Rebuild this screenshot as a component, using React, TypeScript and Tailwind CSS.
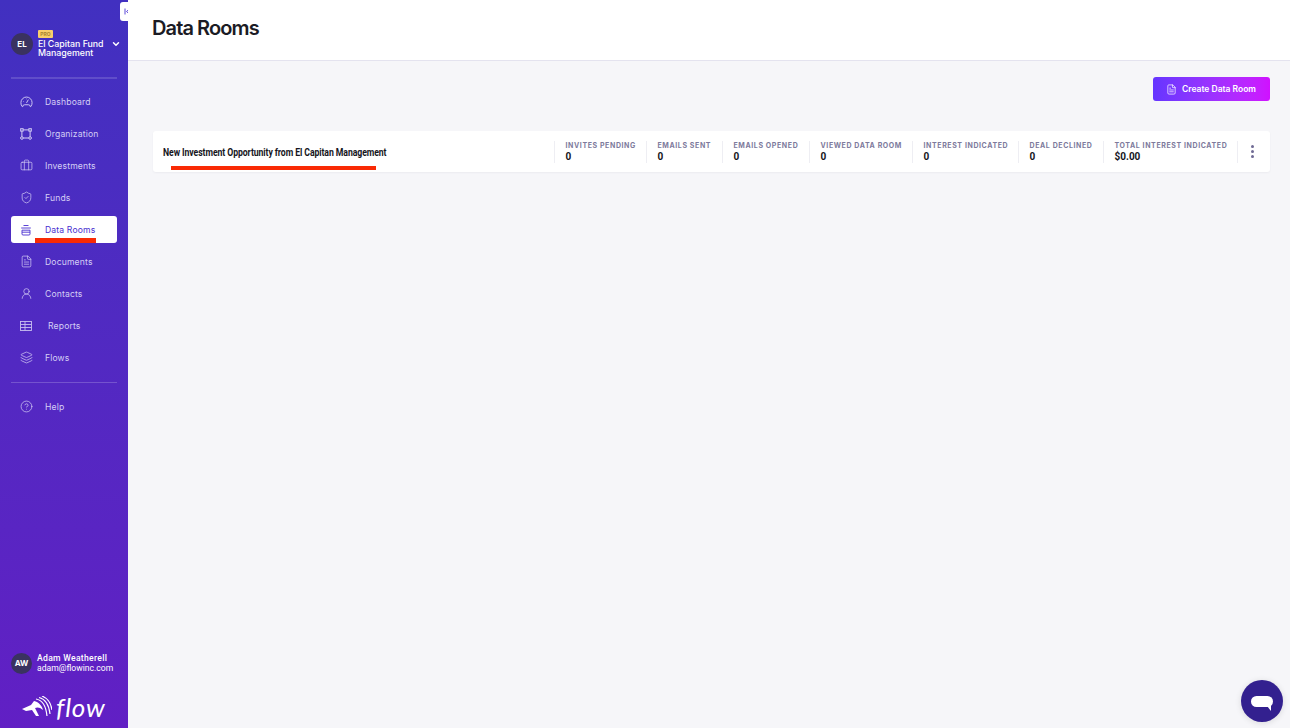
import React from 'react';
import { Briefcase, ChevronDown, CircleHelp, FileText, Layers, ShieldCheck, UserRound } from 'lucide-react';

const GaugeIcon = () => (
    <svg width="13" height="13" viewBox="0 0 14 14" fill="none" stroke="currentColor" strokeWidth="1">
        <path d="M3 12.5H2.4A6.2 6.2 0 0 1 1 8.2a6 6 0 0 1 12 0 6.2 6.2 0 0 1-1.4 4.3H11" />
        <path d="M3 12.5a2 2 0 0 1 2-2h4a2 2 0 0 1 2 2" />
        <path d="M7 8.5 9 5M3.5 7h.5M7 4v.5" />
    </svg>
);

const OrgIcon = () => (
    <svg width="12" height="12" viewBox="0 0 12 12" fill="none" stroke="currentColor" strokeWidth="1">
        <rect x="0.7" y="0.7" width="2.4" height="2.4" />
        <rect x="8.9" y="0.7" width="2.4" height="2.4" />
        <circle cx="1.9" cy="10" r="1.3" />
        <circle cx="10.1" cy="10" r="1.3" />
        <path d="M3.1 1.9h5.8M1.9 3.1v5.6M10.1 3.1v5.6M3.2 10h5.6" />
    </svg>
);

const RoomIcon = () => (
    <svg width="12" height="12" viewBox="0 0 12 12" fill="none" stroke="currentColor" strokeWidth="0.9">
        <path d="M3.5 1.5h5" />
        <path d="M1.2 4h9.6" />
        <path d="M2 6.2h8V10a1 1 0 0 1-1 1H3a1 1 0 0 1-1-1z" />
        <path d="M2 8.2h8" />
    </svg>
);

const ReportIcon = () => (
    <svg width="12" height="10" viewBox="0 0 12 10" fill="none" stroke="currentColor" strokeWidth="0.9" opacity="0.9">
        <rect x="0.5" y="0.5" width="11" height="9" />
        <path d="M0.5 3.5h11M0.5 6.500h11M5 0.5v9" />
    </svg>
);

const CollapseIcon = () => (
    <svg width="7" height="7" viewBox="0 0 7 7" fill="none" stroke="#5b48d8" strokeWidth="1">
        <path d="M1 0.5v6M6 0.5 2.5 3.5 6 6.5" />
    </svg>
);

const nav = [
    { label: 'Dashboard', icon: <GaugeIcon /> },
    { label: 'Organization', icon: <OrgIcon /> },
    { label: 'Investments', icon: <Briefcase size={13} strokeWidth={1.3} /> },
    { label: 'Funds', icon: <ShieldCheck size={13} strokeWidth={1.3} /> },
    { label: 'Data Rooms', icon: <RoomIcon />, active: true },
    { label: 'Documents', icon: <FileText size={13} strokeWidth={1.3} /> },
    { label: 'Contacts', icon: <UserRound size={13} strokeWidth={1.3} /> },
    { label: 'Reports', icon: <ReportIcon />, shift: true },
    { label: 'Flows', icon: <Layers size={13} strokeWidth={1.3} /> },
];

const stats = [
    { label: 'Invites Pending', value: '0', width: 'w-[92px]' },
    { label: 'Emails Sent', value: '0', width: 'w-[76px]' },
    { label: 'Emails Opened', value: '0', width: 'w-[87px]' },
    { label: 'Viewed Data Room', value: '0', width: 'w-[103px]' },
    { label: 'Interest Indicated', value: '0', width: 'w-[106px]' },
    { label: 'Deal Declined', value: '0', width: 'w-[85px]' },
    { label: 'Total Interest Indicated', value: '$0.00', width: 'w-[134px]' },
];

const NavItem = ({ label, icon, active, shift }: { label: string; icon: React.ReactNode; active?: boolean; shift?: boolean }) => (
    <div className="h-8 flex items-center">
        <div className={`w-full h-[27px] rounded-[3px] flex items-center ${active ? 'bg-white text-[#4a2fd0]' : 'text-[#d5cff5]'}`}>
            <span className="w-[30px] flex justify-center shrink-0">{icon}</span>
            <span className={`ml-[4px] pt-[2px] text-[8.6px] font-normal tracking-[0.15px] ${shift ? 'pl-[3px]' : ''}`}>{label}</span>
        </div>
    </div>
);

const FlowMark = () => (
    <svg width="30" height="22" viewBox="0 0 30 22" fill="none">
        <path d="M0 13 9 9l3-4c5 1 8 5 9 9-3-3-6-3-8-2l4 8h-3l-4-6-6 1z" fill="#fff" />
        <path d="M14 3c6 1 10 7 11 17M17 1.500c6 1.500 10 7.500 11 16.500M20 0c5 2 9 7 10 14" stroke="#fff" strokeWidth="1.2" />
    </svg>
);

export default function App() {
    return (
        <div className="w-[1290px] h-[728px] flex overflow-hidden bg-[#f6f6f9] font-['Inter',sans-serif]">
            <aside className="relative w-[128px] shrink-0 h-full flex flex-col px-[11px] bg-gradient-to-b from-[#4130c0] to-[#611fc4] text-white">
                <button className="absolute left-[120px] top-[2px] w-[12px] h-[19px] bg-white rounded-l-[3px] flex items-center justify-center pl-[2px]">
                    <CollapseIcon />
                </button>

                <div className="flex items-center h-[77px] pt-[10px]">
                    <div className="w-[22px] h-[22px] rounded-full bg-[#3a3260] flex items-center justify-center text-[8px] font-bold shrink-0">EL</div>
                    <div className="ml-[5px] w-[72px] shrink-0">
                        <div className="w-[15px] h-[8px] bg-[#f8cf6b] text-[#a8842e] text-[5px] font-bold leading-[8px] text-center rounded-[1px]">PRO</div>
                        <div className="text-[8.8px] font-medium leading-[9.500px] mt-[1px] whitespace-nowrap">
                            El Capitan Fund
                            <br />
                            Management
                        </div>
                    </div>
                    <ChevronDown size={10} strokeWidth={3.5} className="ml-[1px] shrink-0" />
                </div>
                <div className="h-[2px] bg-white/15 shrink-0" />

                <nav className="mt-[6.5px]">
                    {nav.map((item) => (
                        <NavItem key={item.label} {...item} />
                    ))}
                </nav>
                <div className="h-px bg-white/20 mt-[8px] shrink-0" />
                <div className="mt-[8px]">
                    <NavItem label="Help" icon={<CircleHelp size={13} strokeWidth={1.3} />} />
                </div>

                <div className="mt-auto flex items-center h-[24px]">
                    <div className="w-[21px] h-[21px] rounded-full bg-[#3a3260] flex items-center justify-center text-[8px] font-bold shrink-0">AW</div>
                    <div className="ml-[5px] text-[8.6px] leading-[10px] whitespace-nowrap font-['Roboto',sans-serif]">
                        <div className="font-medium tracking-[0.3px]">Adam Weatherell</div>
                        <div>adam@flowinc.com</div>
                    </div>
                </div>
                <div className="flex items-center mt-[20px] mb-[9px] pl-[11px] h-[24px]">
                    <FlowMark />
                    <span className="ml-[4px] text-[26px] leading-none italic font-['Lato',sans-serif] font-normal tracking-[0.8px]">flow</span>
                </div>
            </aside>

            <main className="relative flex-1 min-w-0">
                <header className="h-[61px] bg-white border-b border-[#e4e3ef] flex items-center pl-[24px] pb-[5px]">
                    <h1 className="text-[20px] font-semibold tracking-[-0.9px] text-[#1b1b24]">Data Rooms</h1>
                </header>

                <div className="pl-[25px] pr-[20px]">
                    <div className="flex justify-end mt-[16px]">
                        <button className="w-[117px] h-[24px] rounded-[3px] bg-gradient-to-r from-[#6535ff] to-[#d010ff] text-white text-[8.5px] font-semibold flex items-center justify-center gap-[5px] pr-[1px]">
                            <FileText size={11} strokeWidth={1.6} />
                            Create Data Room
                        </button>
                    </div>

                    <div className="relative mt-[30px] h-[41px] bg-white rounded-[3px] shadow-[0_1px_2px_rgba(30,30,80,0.05)] flex items-center">
                        <div className="flex-1 min-w-0 pl-[10px] pt-[4px]">
                            <div className="origin-left scale-x-[0.79] font-['Roboto',sans-serif] text-[11px] font-bold tracking-[-0.1px] text-[#15151c] whitespace-nowrap">
                                New Investment Opportunity from El Capitan Management
                            </div>
                        </div>
                        {stats.map((s) => (
                            <div key={s.label} className={`${s.width} h-[22px] border-l border-[#eeeef3] pl-[10.5px] shrink-0`}>
                                <div className="text-[7px] leading-[9px] font-bold uppercase tracking-[0.6px] text-[#7d7a9c] whitespace-nowrap">{s.label}</div>
                                <div className="font-['Roboto',sans-serif] text-[10px] leading-[14px] font-bold text-[#15151c]">{s.value}</div>
                            </div>
                        ))}
                        <div className="w-[33px] h-[22px] border-l border-[#eeeef3] flex flex-col items-center justify-center gap-[2px] shrink-0 pr-[3px]">
                            <span className="w-[3px] h-[3px] rounded-full bg-[#6f6a94]" />
                            <span className="w-[3px] h-[3px] rounded-full bg-[#6f6a94]" />
                            <span className="w-[3px] h-[3px] rounded-full bg-[#6f6a94]" />
                        </div>
                        <div className="absolute left-[18px] top-[35px] w-[205px] h-[4px] bg-[#f92a05]" />
                    </div>
                </div>

                <div className="absolute left-[1113px] top-[680px] w-[42px] h-[42px] rounded-full bg-[#33208f] flex items-center justify-center shadow-[0_1px_6px_rgba(0,0,0,0.12)]">
                    <div className="relative w-[22px] h-[11px] rounded-[6px] bg-white">
                        <div className="absolute right-[2px] top-[10px] w-0 h-0 border-t-[5px] border-t-white border-l-[4px] border-l-transparent" />
                    </div>
                </div>
            </main>

            <div className="absolute left-[35px] top-[238px] w-[61px] h-[5px] bg-[#f92a05]" />
        </div>
    );
}
